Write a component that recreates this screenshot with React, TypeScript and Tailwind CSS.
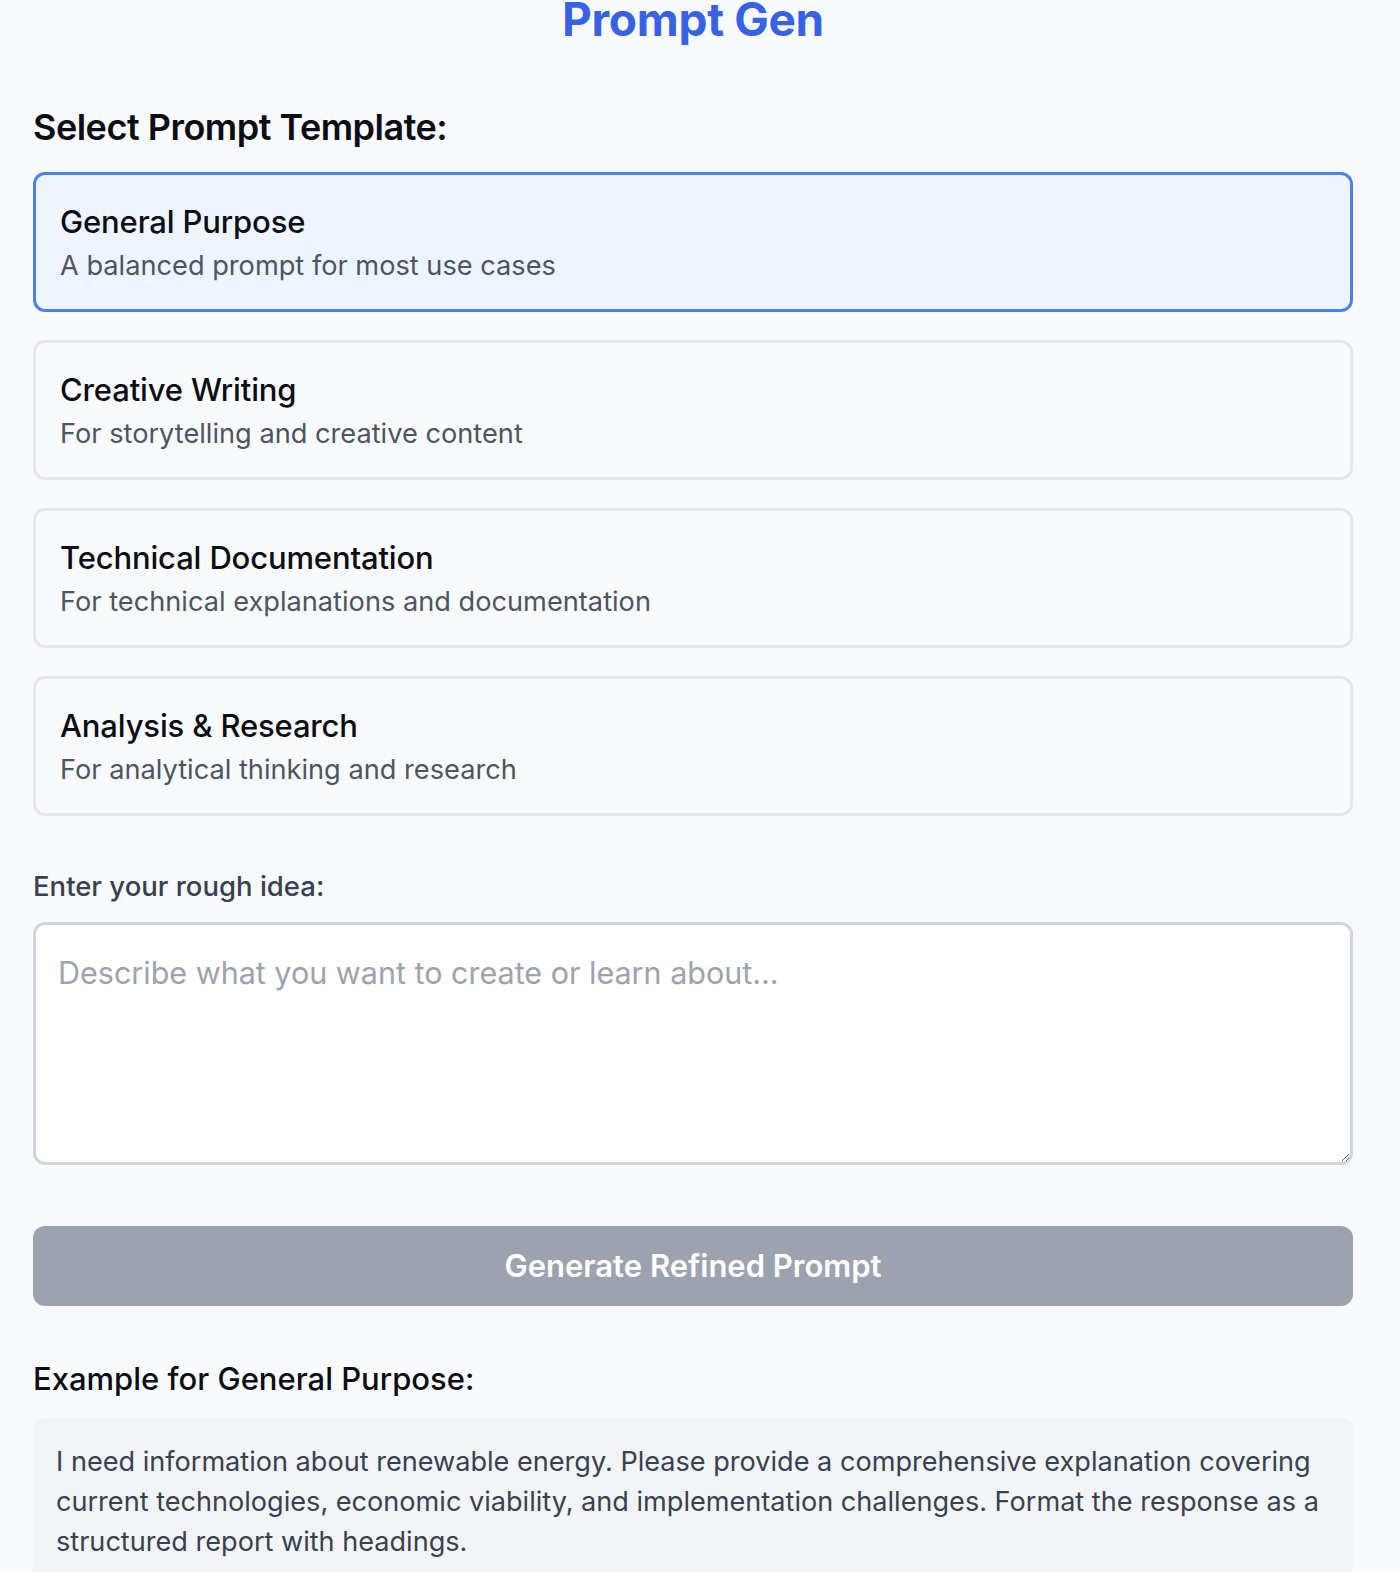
import { useState } from "react";

const templates = [
  { id: "general", name: "General Purpose", desc: "A balanced prompt for most use cases" },
  { id: "creative", name: "Creative Writing", desc: "For storytelling and creative content" },
  { id: "technical", name: "Technical Documentation", desc: "For technical explanations and documentation" },
  { id: "analysis", name: "Analysis & Research", desc: "For analytical thinking and research" },
];

const App = () => {
  const [selected, setSelected] = useState("general");
  const [idea, setIdea] = useState("");
  const current = templates.find((t) => t.id === selected)!;

  return (
    <div className="h-[1572px] overflow-hidden bg-[#f9fafb] font-['Inter',sans-serif]">
      <div className="w-[1320px] ml-[33px]">
        <h1 className="text-center text-[46px] leading-[38px] font-bold text-[#3662e3] tracking-[-0.3px]">
          Prompt Gen
        </h1>

        <h2 className="mt-[64px] mb-[20px] text-[36px] leading-[50px] font-semibold text-[#0b0d14] tracking-[-0.5px]">
          Select Prompt Template:
        </h2>

        <div className="flex flex-col gap-[28px]">
          {templates.map((t) => (
            <button
              key={t.id}
              onClick={() => setSelected(t.id)}
              className={`text-left h-[140px] rounded-[12px] border-[3px] px-[24px] pt-[24px] pb-[23px] ${
                selected === t.id
                  ? "border-[#4d82ec] bg-[#eef5ff]"
                  : "border-[#e5e7eb] bg-[#f9fafb]"
              }`}
            >
              <div className="text-[31px] leading-[46px] font-medium text-[#0b0d14] tracking-[-0.15px]">
                {t.name}
              </div>
              <div className="mt-[1px] text-[27.2px] leading-[40px] text-[#4b5563]">{t.desc}</div>
            </button>
          ))}
        </div>

        <label className="block mt-[52px] text-[27.5px] leading-[36px] font-medium text-[#374151]">
          Enter your rough idea:
        </label>
        <textarea
          value={idea}
          onChange={(e) => setIdea(e.target.value)}
          placeholder="Describe what you want to create or learn about..."
          className="mt-[18px] block w-full h-[243px] rounded-[12px] border-[3px] border-[#d1d5db] bg-white px-[22px] py-[25px] text-[30.5px] leading-[45px] text-[#111827] placeholder:text-[#9ca3af] outline-none"
        />

        <button
          disabled={!idea.trim()}
          className="mt-[61px] w-full h-[80px] rounded-[12px] bg-[#9ca3af] text-white text-[31px] font-semibold"
        >
          Generate Refined Prompt
        </button>

        <h3 className="mt-[51px] mb-[17px] text-[31px] leading-[44px] font-medium text-[#0b0d14]">
          Example for {current.name}:
        </h3>
        <div className="rounded-[12px] bg-[#f3f4f6] px-[23px] pt-[24px] pb-[24px] text-[27.1px] leading-[40px] text-[#374151]">
          I need information about renewable energy. Please provide a comprehensive explanation covering
          current technologies, economic viability, and implementation challenges. Format the response
          as a structured report with headings.
        </div>
      </div>
    </div>
  );
};

export default App;
